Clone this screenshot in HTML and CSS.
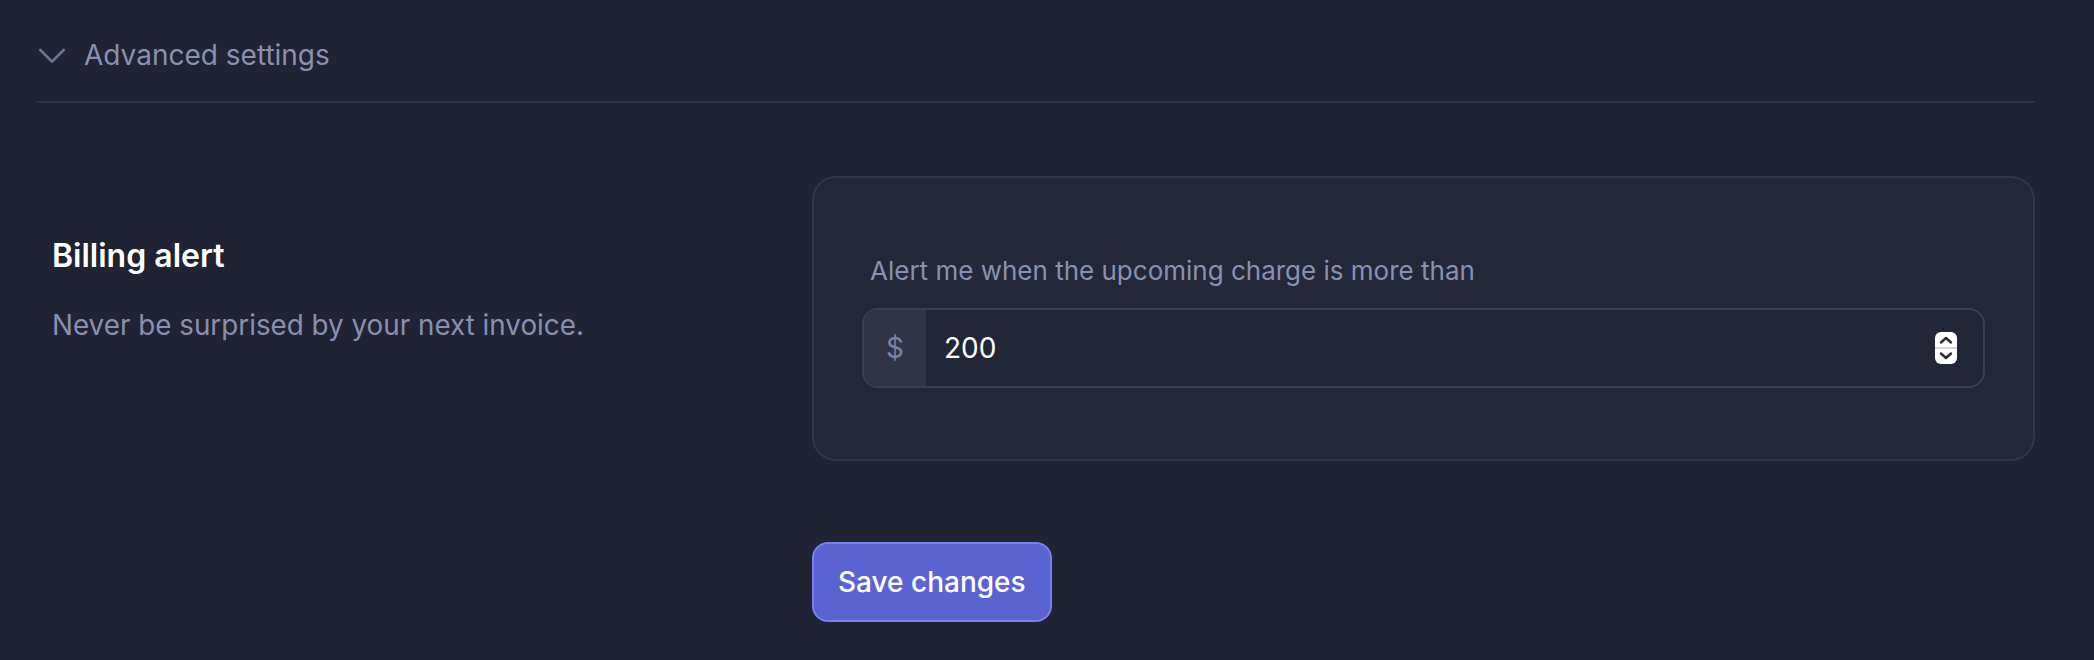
FILE: index.html
```html
<!DOCTYPE html>
<html lang="en">
<head>
<meta charset="utf-8">
<title>Billing settings</title>
<link rel="stylesheet" href="styles.css">
</head>
<body>
<div class="page">
  <div class="adv-header">
    <svg class="chev" viewBox="0 0 24 24" fill="none" stroke="currentColor" stroke-width="1.6" stroke-linecap="round" stroke-linejoin="round"><path d="M19 9l-7 7-7-7"/></svg>
    <span class="adv-title">Advanced settings</span>
  </div>
  <div class="section">
    <div class="intro">
      <div class="intro-title">Billing alert</div>
      <div class="intro-desc">Never be surprised by your next invoice.</div>
    </div>
    <div class="right">
      <div class="card">
        <label class="field-label" for="amount">Alert me when the upcoming charge is more than</label>
        <div class="input-group">
          <span class="addon">$</span>
          <input id="amount" class="amount" type="text" value="200">
          <svg class="spin" viewBox="0 0 22 32">
            <rect x="0" y="0" width="22" height="32" rx="6" fill="#ffffff"/>
            <rect x="0" y="15" width="22" height="2" fill="#d4d4d8"/>
            <path d="M6 10.5l5-4.5 5 4.5" fill="none" stroke="#2b2b2f" stroke-width="2.4" stroke-linecap="round" stroke-linejoin="round"/>
            <path d="M6 21.5l5 4.5 5-4.5" fill="none" stroke="#2b2b2f" stroke-width="2.4" stroke-linecap="round" stroke-linejoin="round"/>
          </svg>
        </div>
      </div>
      <button class="save" type="button">Save changes</button>
    </div>
  </div>
</div>
</body>
</html>
```
FILE: styles.css
```css
html, body {
  margin: 0;
  padding: 0;
  background: #1f2333;
  font-family: Inter, "Noto Sans", sans-serif;
}
.page {
  padding: 0 59px 0 36px;
  height: 660px;
  box-sizing: border-box;
}
.adv-header {
  display: flex;
  align-items: center;
  padding: 35px 0 26px 0;
  border-bottom: 2px solid #2c3143;
}
.chev {
  width: 40px;
  height: 40px;
  margin-left: -4px;
  color: #6d7592;
  flex: none;
}
.adv-title {
  margin-left: 12px;
  font-size: 28px;
  line-height: 40px;
  color: #8a91b0;
}
.section {
  display: grid;
  grid-template-columns: 776px 1fr;
  margin-top: 73px;
}
.intro {
  padding: 56px 0 0 16px;
}
.intro-title {
  font-size: 32px;
  line-height: 48px;
  font-weight: 600;
  color: #ffffff;
}
.intro-desc {
  margin-top: 25px;
  font-size: 27.8px;
  line-height: 40px;
  color: #8990ae;
}
.right {
  display: flex;
  flex-direction: column;
  align-items: flex-start;
  gap: 81px;
}
.card {
  align-self: stretch;
  background: #232839;
  border: 2px solid #31374a;
  border-radius: 24px;
  padding: 75px 48px 71px 48px;
  display: flex;
  flex-direction: column;
  gap: 19px;
}
.field-label {
  padding-left: 8px;
  font-size: 26px;
  line-height: 36px;
  color: #8a91b0;
}
.input-group {
  display: flex;
  align-items: center;
  height: 80px;
  box-sizing: border-box;
  border: 2px solid #394055;
  border-radius: 16px;
  overflow: hidden;
  background: #222738;
  padding-right: 26px;
}
.addon {
  width: 62px;
  align-self: stretch;
  display: flex;
  align-items: center;
  justify-content: center;
  background: #2f3446;
  color: #7b83a2;
  font-size: 28px;
}
.amount {
  flex: 1;
  min-width: 0;
  background: transparent;
  border: none;
  outline: none;
  padding: 0 0 0 18px;
  font-family: Inter, "Noto Sans", sans-serif;
  font-size: 28px;
  line-height: 40px;
  color: #ffffff;
}
.spin {
  width: 22px;
  height: 32px;
  flex: none;
}
.save {
  background: #5b63d3;
  border: 2px solid #7880ec;
  border-radius: 16px;
  padding: 18px 24px;
  font-family: Inter, "Noto Sans", sans-serif;
  font-size: 28px;
  line-height: 40px;
  font-weight: 500;
  color: #ffffff;
  cursor: pointer;
}
```
